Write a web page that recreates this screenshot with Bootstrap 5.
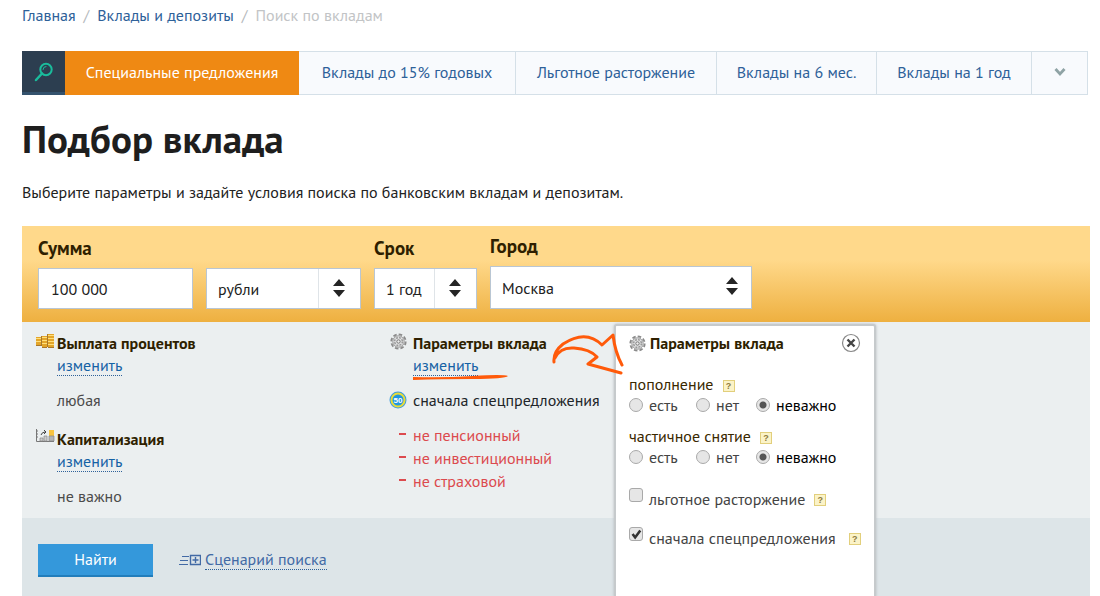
<!DOCTYPE html>
<html lang="ru">
<head>
<meta charset="utf-8">
<meta name="viewport" content="width=device-width, initial-scale=1">
<title>Подбор вклада</title>
<link href="https://cdn.jsdelivr.net/npm/bootstrap@5.3.0/dist/css/bootstrap.min.css" rel="stylesheet">
<style>
  body { font-family: "PT Sans", "Open Sans", "Noto Sans", sans-serif; font-size: 16px; line-height: 24px; color: #222; background: #fff; }
  a { color: #2e6199; text-decoration: none; }
  .page { padding: 3px 10px 0 22px; }
  .breadcrumb { --bs-breadcrumb-divider-color: #b5b9bc; --bs-breadcrumb-item-padding-x: 8px; --bs-breadcrumb-item-active-color: #c2c4c6; }
  .offers { display: grid; grid-template-columns: 43px 234fr 217fr 201fr 160fr 155fr 56px; height: 44px; margin: 24px 2px 0 0; }
  .offers > * { display: flex; align-items: center; justify-content: center; background: #f8fafd; border: solid #d5e0e8; border-width: 1px 1px 1px 0; white-space: nowrap; padding: 0 0 3px; }
  .offers .search-btn { background: #2c3e50; border: 0; border-bottom: 3px solid #34526d; padding: 0 2px 0 0; }
  .offers .active { background: #ef8913; border: 0; color: #fff; }
  h1 { font-size: 39px; font-weight: 700; line-height: 48px; margin: 20px 0 0; color: #1e1e1e; }
  .intro { margin: 17px 0 22px; }
  .finder { color: #2f1f00; }
  .finder-head { background: linear-gradient(#ffd98b 35%, #eeb040); padding: 8px 16px 13px; gap: 13px; }
  .field-title { display: block; font-size: 19px; font-weight: 700; line-height: 24px; margin-bottom: 8px; }
  .finder-head .form-control, .finder-head .form-select { height: 41px; border: 1px solid #b9c6d3; border-radius: 0; font-size: 16px; color: #222; padding: 0 12px; background-color: #fff; }
  .finder-head .form-select { padding: 0 0 0 11px; background-repeat: no-repeat; background-size: 42px 41px; background-position: right center;
    background-image: url("data:image/svg+xml,%3Csvg xmlns='http://www.w3.org/2000/svg' viewBox='0 0 42 41'%3E%3Cpath d='M.5 0v41' stroke='%23dfe4e8'/%3E%3Cpath d='M15 18l6-7 6 7zM15 22h12l-6 7z' fill='%23252525'/%3E%3C/svg%3E"); }
  .finder-head .city-select { height: 43px; background-size: 38px 41px;
    background-image: url("data:image/svg+xml,%3Csvg xmlns='http://www.w3.org/2000/svg' viewBox='0 0 38 41'%3E%3Cpath d='M13 17l6-7 6 7zM13 21h12l-6 7z' fill='%23252525'/%3E%3C/svg%3E"); }
  .w-sum { width: 155px; } .w-term { width: 103px; } .w-city { width: 262px; }
  .finder-body { background: #ebeff0; padding: 9px 14px; min-height: 196px; }
  .col-left { width: 354px; }
  .param { display: grid; grid-template-columns: 21px auto; justify-content: start; }
  .param-wide { grid-template-columns: 23px auto; }
  .param > * { grid-column: 2; justify-self: start; }
  .param > .ico { grid-column: 1; margin-top: 2px; }
  .param h2, .popup h2 { font-size: 16px; font-weight: 700; line-height: 24px; margin: 0; color: #2f1f00; }
  .dotted { border-bottom: 1px dotted #2e6199; line-height: 20px; color: #1562a5; }
  .value { color: #4b4b4b; margin-top: 12px; line-height: 24px; }
  .second { margin-top: 15px; }
  .special { margin-top: 12px; }
  .param.special > .ico { margin: 3px 0 0 -1px; }
  .minus-list { color: #dc4a4e; line-height: 23px; margin: 12px 0 0 9px; }
  .minus-list li::before { content: ""; display: inline-block; width: 7px; height: 2px; background: #dc4a4e; margin-right: 7px; vertical-align: 6px; }
  .finder-foot { background: #dde5e8; padding: 26px 16px 20px; }
  .finder-foot .btn-find { width: 115px; height: 33px; padding: 0 0 2px; border: 0; border-bottom: 2px solid #217dbb; border-radius: 0; background: #3498db; color: #fff; font-size: 16px; }
  .finder-foot .dotted { color: #426aa5; line-height: 20px; }
  .scenario { margin: 5px 0 0 22px; }
  .popup { position: absolute; left: 592px; top: 2px; bottom: 0; width: 262px; background: #fff; border: 2px solid #c6cacc; border-bottom: 0; border-radius: 3px 3px 0 0; box-shadow: 0 0 3px #b4b8ba; padding: 5px 13px 0; color: #444; white-space: nowrap; }
  .popup .legend-line { color: #3a2800; line-height: 22px; font-size: 16px; margin: 0; float: none; }
  .popup label { line-height: 20px; }
  .topup { margin: 18px 0 10px; }
  .help { width: 12px; height: 12px; padding: 0; border: 1px solid #e2cf7c; background: #fbf3c8; color: #8d7a3c; font: 700 9px/10px "Liberation Sans", sans-serif; margin-left: 9px; vertical-align: 1px; flex: none; }
  .popup .form-check-input { width: 14px; height: 14px; margin: 0 6px 0 0; flex: none; float: none; border: 1px solid #a9a9a9; background-color: #e6e6e6; }
  .popup .form-check-input[type=radio]:checked { background-image: radial-gradient(circle, #555 3px, transparent 4px); background-color: #e6e6e6; }
  .popup .form-check-input[type=checkbox] { border-radius: 3px; align-self: flex-start; }
  .popup .form-check-input[type=checkbox]:checked { background-color: #e6e6e6; background-image: url("data:image/svg+xml,%3Csvg xmlns='http://www.w3.org/2000/svg' viewBox='0 0 14 14'%3E%3Cpath d='M3 7l3 4 6-8' fill='none' stroke='%23333' stroke-width='3'/%3E%3C/svg%3E"); }
  .tick { height: 21px; margin-top: 18px; }
  fieldset + .tick { margin-top: 21px; }
  .tick .help { margin-bottom: 3px; }
  .tick .help-far { margin-left: 13px; }
  .radios > span { display: flex; align-items: center; }
  .opt-yes { width: 67px; } .opt-no { width: 60px; }
  .popup .picked { color: #000; }
  .close-btn { border: 0; background: none; padding: 0; line-height: 0; }
  .arrow-mark { position: absolute; left: 528px; top: 10px; pointer-events: none; }
  .stroke-mark { position: absolute; left: 0; top: 19px; }
</style>
</head>
<body>
<svg width="0" height="0" class="position-absolute">
  <symbol id="gear" viewBox="0 0 17 17">
    <circle cx="8.5" cy="8.5" r="7.2" fill="none" stroke="#8a8a8a" stroke-width="1.800" stroke-dasharray="3.600 2.050"/>
    <circle cx="8.5" cy="8.5" r="5.7" fill="#e2e3e4" stroke="#959595"/>
    <circle cx="8.5" cy="8.5" r="3.9" fill="none" stroke="#999" stroke-width="1.500" stroke-dasharray="2 1.060"/>
    <circle cx="8.5" cy="8.5" r="1.7" fill="#eee" stroke="#777"/>
  </symbol>
</svg>
<div class="page d-flex flex-column min-vh-100">
  <nav aria-label="Навигация">
    <ol class="breadcrumb mb-0">
      <li class="breadcrumb-item"><a href="#">Главная</a></li>
      <li class="breadcrumb-item"><a href="#">Вклады и депозиты</a></li>
      <li class="breadcrumb-item active" aria-current="page">Поиск по вкладам</li>
    </ol>
  </nav>

  <nav class="offers" aria-label="Предложения">
    <button class="search-btn" type="button" aria-label="Поиск"><svg width="20" height="20" viewBox="0 0 20 20" fill="none" stroke="#1abc9c" stroke-linecap="round"><circle cx="13" cy="7.500" r="5.700" stroke-width="2"/><path d="M9 11.500L3 18" stroke-width="2.500"/><path d="M10 7.500a3 3 0 0 1 3-3" stroke-width="1"/></svg></button>
    <a class="active" href="#">Специальные предложения</a>
    <a href="#">Вклады до 15% годовых</a>
    <a href="#">Льготное расторжение</a>
    <a href="#">Вклады на 6 мес.</a>
    <a href="#">Вклады на 1 год</a>
    <button type="button" aria-label="Ещё"><svg width="12" height="10" viewBox="0 0 12 10"><path d="M1.500 2L6 7l4.500-5" fill="none" stroke="#8fa3a5" stroke-width="2.800"/></svg></button>
  </nav>

  <h1>Подбор вклада</h1>
  <p class="intro">Выберите параметры и задайте условия поиска по банковским вкладам и депозитам.</p>

  <form class="finder d-flex flex-column flex-grow-1">
    <div class="finder-head d-flex align-items-end">
      <div class="w-sum"><label class="field-title" for="sum">Сумма</label><input class="form-control" id="sum" value="100 000"></div>
      <div class="w-sum"><select class="form-select" aria-label="Валюта"><option>рубли</option></select></div>
      <div class="w-term"><label class="field-title" for="term">Срок</label><select class="form-select" id="term"><option>1 год</option></select></div>
      <div class="w-city"><label class="field-title" for="city">Город</label><select class="form-select city-select" id="city"><option>Москва</option></select></div>
    </div>

    <div class="position-relative d-flex flex-column flex-grow-1">
      <div class="finder-body d-flex">
        <div class="col-left">
          <div class="param">
            <svg class="ico" width="19" height="16" viewBox="0 0 19 16"><path d="M0 4h5v8H0zM6 3h5v11H6zM12 1h6v13h-6z" fill="#e3a52a"/><path d="M0 5.500h5M0 8.500h5M6 4.500h5M6 7.500h5M6 10.500h5M12 2.500h6M12 5.500h6M12 8.500h6M12 11.500h6" stroke="#ffdf7a"/><path d="M5.500 3v10M11.500 1v13M0 12.500h5M6 14.500h5M12 14.500h6" stroke="#a8772b" fill="none"/></svg>
            <h2>Выплата процентов</h2>
            <a class="dotted" href="#">изменить</a>
            <div class="value">любая</div>
          </div>
          <div class="param second">
            <svg class="ico" width="19" height="16" viewBox="0 0 19 16"><path d="M.5 0v12.500H18M0 2h2M0 5h2M0 8h2" fill="none" stroke="#777"/><path d="M4 9h3v3H4zM8 7h3v5H8z" fill="#ccc" stroke="#888" stroke-width=".7"/><path d="M13 1h5v6h-5z" fill="#f9c440"/><path d="M13 7h5v5h-5z" fill="#b5b5b5" stroke="#888" stroke-width=".7"/><path d="M5 6q1-3 4-3M8 1l2 2-2 2" fill="none" stroke="#444"/></svg>
            <h2>Капитализация</h2>
            <a class="dotted" href="#">изменить</a>
            <div class="value">не важно</div>
          </div>
        </div>
        <div>
          <div class="param param-wide">
            <svg class="ico" width="17" height="17"><use href="#gear"/></svg>
            <h2>Параметры вклада</h2>
            <div class="position-relative"><a class="dotted d-block" href="#">изменить</a><svg class="stroke-mark" width="96" height="7" viewBox="0 0 96 7"><path d="M0 3Q30 4 60 2T95 2Q92 5 60 5T0 6z" fill="#ff5a0a"/></svg></div>
          </div>
          <div class="param param-wide special">
            <svg class="ico" width="18" height="18" viewBox="0 0 18 18"><circle cx="9" cy="9" r="8.500" fill="#3d9be0"/><circle cx="9" cy="9" r="6.500" fill="#1f96e0" stroke="#e8dc38" stroke-width="2"/><text x="9" y="12" font-family="Liberation Sans" font-size="8" font-weight="700" text-anchor="middle" fill="#fff">50</text></svg>
            <div class="text-dark">сначала спецпредложения</div>
          </div>
          <ul class="minus-list list-unstyled"><li>не пенсионный</li><li>не инвестиционный</li><li>не страховой</li></ul>
        </div>
      </div>

      <div class="finder-foot flex-grow-1 d-flex align-items-start">
        <button class="btn btn-find" type="submit">Найти</button>
        <div class="scenario d-flex align-items-center">
          <svg class="ms-1 me-1" width="22" height="12" viewBox="0 0 22 12" fill="none" stroke="#426aa5"><path d="M3 2.500h7M1 6.500h8M0 10.500h9"/><path d="M11.500 1.500h10v9h-10zM16.500 3v6M13.500 6h6" stroke-width="1.400"/></svg>
          <a class="dotted" href="#">Сценарий поиска</a>
        </div>
      </div>

      <div class="popup" role="dialog" aria-labelledby="popup-title">
        <div class="d-flex">
          <svg class="mt-1" width="17" height="17"><use href="#gear"/></svg>
          <h2 class="ms-1" id="popup-title">Параметры вклада</h2>
          <button class="close-btn ms-auto" type="button" aria-label="Закрыть"><svg width="20" height="20" viewBox="0 0 20 20"><circle cx="10" cy="10" r="8.500" fill="#fff" stroke="#888" stroke-width="1.200"/><path d="M6.500 6.500l7 7M13.500 6.500l-7 7" stroke="#444" stroke-width="2.400"/></svg></button>
        </div>
        <fieldset class="topup">
          <legend class="legend-line">пополнение<button class="help" type="button">?</button></legend>
          <div class="radios d-flex">
            <span class="opt-yes"><input class="form-check-input" type="radio" name="topup" id="t1"><label for="t1">есть</label></span>
            <span class="opt-no"><input class="form-check-input" type="radio" name="topup" id="t2"><label for="t2">нет</label></span>
            <span><input class="form-check-input" type="radio" name="topup" id="t3" checked><label class="picked" for="t3">неважно</label></span>
          </div>
        </fieldset>
        <fieldset>
          <legend class="legend-line">частичное снятие<button class="help" type="button">?</button></legend>
          <div class="radios d-flex">
            <span class="opt-yes"><input class="form-check-input" type="radio" name="part" id="p1"><label for="p1">есть</label></span>
            <span class="opt-no"><input class="form-check-input" type="radio" name="part" id="p2"><label for="p2">нет</label></span>
            <span><input class="form-check-input" type="radio" name="part" id="p3" checked><label class="picked" for="p3">неважно</label></span>
          </div>
        </fieldset>
        <div class="tick d-flex align-items-end"><input class="form-check-input" type="checkbox" id="c1"><label for="c1">льготное расторжение</label><button class="help" type="button">?</button></div>
        <div class="tick d-flex align-items-end"><input class="form-check-input" type="checkbox" id="c2" checked><label for="c2">сначала спецпредложения</label><button class="help help-far" type="button">?</button></div>
      </div>
      <svg class="arrow-mark" width="74" height="46" viewBox="0 0 74 46" fill="none" stroke="#ff5a0a" stroke-width="3" stroke-linejoin="round" stroke-linecap="round"><path d="M4 30Q3 20 13 12Q36-3 52 13L63 3Q65 20 72 33M5 26Q10 15 24 16Q40 17 47 25L38 32L71 41"/></svg>
    </div>
  </form>
</div>
<script src="https://cdn.jsdelivr.net/npm/bootstrap@5.3.0/dist/js/bootstrap.bundle.min.js"></script>
</body>
</html>
